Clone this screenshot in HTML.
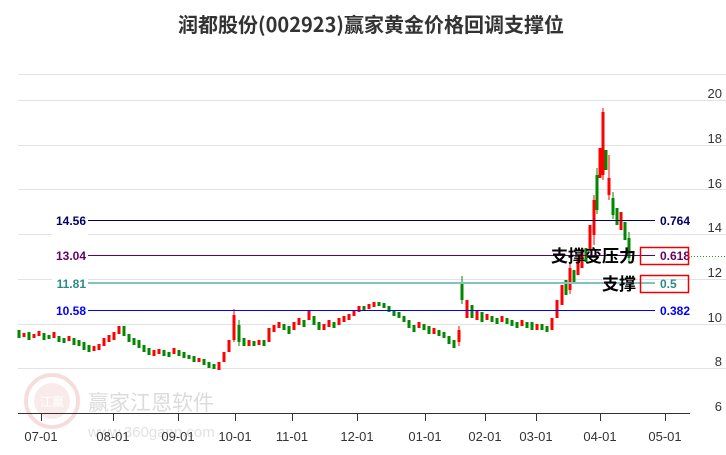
<!DOCTYPE html>
<html><head><meta charset="utf-8"><style>
body{margin:0;background:#fff;width:726px;height:450px;overflow:hidden;font-family:"Liberation Sans","Noto Sans CJK SC",sans-serif}
</style></head><body>
<svg width="726" height="450" xmlns="http://www.w3.org/2000/svg" font-family="Liberation Sans, Noto Sans CJK SC, sans-serif">
<text x="371" y="32" text-anchor="middle" font-size="20" font-weight="bold" fill="#333" font-family="Noto Sans CJK SC, sans-serif">润都股份(002923)赢家黄金价格回调支撑位</text>
<g stroke="#e3e3e3" stroke-width="1">
<line x1="18" y1="74.5" x2="726" y2="74.5"/><line x1="18" y1="100.5" x2="726" y2="100.5"/><line x1="18" y1="145.5" x2="726" y2="145.5"/><line x1="18" y1="189.5" x2="726" y2="189.5"/><line x1="18" y1="234.5" x2="726" y2="234.5"/><line x1="18" y1="279.5" x2="726" y2="279.5"/><line x1="18" y1="324.5" x2="726" y2="324.5"/><line x1="18" y1="368.5" x2="726" y2="368.5"/>
</g>
<g font-size="13" fill="#333" text-anchor="end">
<text x="722" y="98">20</text><text x="722" y="143">18</text><text x="722" y="188">16</text><text x="722" y="232">14</text><text x="722" y="277">12</text><text x="722" y="322">10</text><text x="722" y="366">8</text><text x="722" y="411">6</text>
</g>
<g opacity="0.35">
<circle cx="52" cy="401" r="26" fill="none" stroke="#e8a0a0" stroke-width="4"/>
<circle cx="52" cy="401" r="18" fill="#f2c8c8"/>
<text x="52" y="406" font-size="12" fill="#fff" text-anchor="middle" font-family="Noto Sans CJK SC, sans-serif">江赢</text>
<text x="88" y="410" font-size="21" fill="#999" font-family="Noto Sans CJK SC, sans-serif">赢家江恩软件</text>
<text x="88" y="437" font-size="15" fill="#aaa">www.360gann.com</text>
</g>
<!-- candles -->
<path fill="none" stroke="#f00" stroke-width="3" d="M24 333V337M34 334V338M39 331V336M54 332V338M69 336V341M94 346V351M99 344V350M104 338V346M109 335V342M114 332V340M119 326V334M154 350V356M159 349V354M174 348V354M199 358V362M219 362V370M224 352V362M229 340V352M234 315V340M249 340V346M259 340V345M269 328V342M274 325V332M279 322V328M294 322V330M299 318V325M309 310V320M324 324V330M329 320V327M339 318V325M344 316V322M349 314V320M354 310V316M359 306V312M369 304V309M374 302V307M419 322V328M434 328V334M459 330V342M467 300V318M477 310V320M487 314V320M502 316V322M522 320V326M537 324V330M552 318V330M557 300V318M562 285V305M570 268V290M578 258V275M582 250V268M590 225V250M594 200V235M600 148V178M603 112V175M609 178V195M621 212V230"/>
<path fill="none" stroke="#f00" stroke-width="1" d="M234 309V342M594 195V245M603 108V180M609 155V200M459 326V346M570 262V294"/>
<path fill="none" stroke="#080" stroke-width="3" d="M19 330V338M29 332V340M44 333V340M49 335V339M59 336V342M64 338V343M74 338V345M79 340V346M84 342V350M89 345V352M124 326V336M129 334V342M134 338V345M139 340V348M144 345V352M149 348V355M164 350V356M169 352V357M179 350V356M184 352V358M189 355V359M194 356V362M204 359V365M209 362V368M214 364V369M239 325V342M244 338V346M254 341V346M264 340V346M284 324V330M289 326V334M304 320V327M314 316V325M319 322V330M334 322V328M364 306V310M379 302V306M384 303V308M389 306V312M394 310V316M399 312V318M404 316V322M409 320V328M414 325V332M424 324V330M429 326V334M439 330V336M444 332V338M449 336V344M454 340V348M462 282V300M472 305V318M482 312V322M492 316V322M497 318V324M507 318V324M512 320V326M517 322V328M527 322V328M532 322V330M542 324V330M547 326V332M566 280V295M574 270V282M586 248V262M597 175V210M606 150V170M613 198V215M617 208V225M625 222V240M629 238V258"/>
<path fill="none" stroke="#080" stroke-width="1" d="M462 276V304M239 320V346M597 168V214M629 232V262M613 192V219"/>
<!-- fib lines -->
<line x1="68" y1="220.5" x2="655" y2="220.5" stroke="#000066" stroke-width="1"/>
<line x1="68" y1="255.5" x2="655" y2="255.5" stroke="#660066" stroke-width="1"/>
<line x1="68" y1="283" x2="655" y2="283" stroke="#7fc4c0" stroke-width="2"/>
<line x1="68" y1="310.5" x2="655" y2="310.5" stroke="#0000ff" stroke-width="1"/>
<line x1="688" y1="256.5" x2="726" y2="256.5" stroke="#3a8a3a" stroke-width="1" stroke-dasharray="1,2"/>
<g font-size="12" font-weight="bold" text-anchor="end">
<text x="87" y="225" fill="#000066">14.56</text>
<text x="87" y="260" fill="#660066">13.04</text>
<text x="87" y="288" fill="#2a8a8a">11.81</text>
<text x="87" y="315" fill="#0000ff">10.58</text>
</g>
<rect x="52" y="212" width="36" height="108" fill="#fff"/>
<g font-size="12" font-weight="bold" text-anchor="end">
<text x="86" y="225" fill="#000066">14.56</text>
<text x="86" y="260" fill="#660066">13.04</text>
<text x="86" y="288" fill="#2a8a8a">11.81</text>
<text x="86" y="315" fill="#0000ff">10.58</text>
</g>
<g font-size="12" font-weight="bold">
<text x="660" y="225" fill="#000066">0.764</text>
<text x="660" y="260" fill="#660066">0.618</text>
<text x="660" y="288" fill="#2a8a8a">0.5</text>
<text x="660" y="315" fill="#0000ff">0.382</text>
</g>
<rect x="640.5" y="247.5" width="48" height="17" fill="none" stroke="#e00" stroke-width="1.5"/>
<rect x="640.5" y="275.5" width="48" height="17" fill="none" stroke="#e00" stroke-width="1.5"/>
<g font-size="17" font-weight="bold" fill="#000" text-anchor="end" font-family="Noto Sans CJK SC, sans-serif">
<text x="636" y="262">支撑变压力</text>
<text x="636" y="290">支撑</text>
</g>
<line x1="18" y1="413.5" x2="690" y2="413.5" stroke="#333"/>
<g stroke="#333">
<line x1="41.5" y1="413" x2="41.5" y2="421"/><line x1="113.5" y1="413" x2="113.5" y2="421"/><line x1="178.5" y1="413" x2="178.5" y2="421"/><line x1="235.5" y1="413" x2="235.5" y2="421"/><line x1="292.5" y1="413" x2="292.5" y2="421"/><line x1="357.5" y1="413" x2="357.5" y2="421"/><line x1="425.5" y1="413" x2="425.5" y2="421"/><line x1="485.5" y1="413" x2="485.5" y2="421"/><line x1="536.5" y1="413" x2="536.5" y2="421"/><line x1="600.5" y1="413" x2="600.5" y2="421"/><line x1="665.5" y1="413" x2="665.5" y2="421"/>
</g>
<g font-size="13" fill="#333" text-anchor="middle">
<text x="41" y="441">07-01</text><text x="113" y="441">08-01</text><text x="178" y="441">09-01</text><text x="235" y="441">10-01</text><text x="292" y="441">11-01</text><text x="357" y="441">12-01</text><text x="425" y="441">01-01</text><text x="485" y="441">02-01</text><text x="536" y="441">03-01</text><text x="600" y="441">04-01</text><text x="665" y="441">05-01</text>
</g>
</svg>
</body></html>
